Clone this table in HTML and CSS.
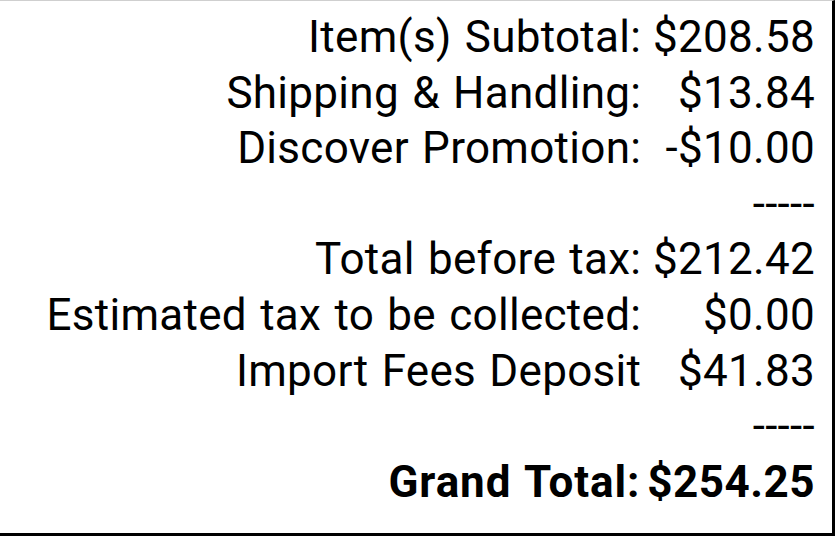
FILE: index.html
```
<!DOCTYPE html>
<html>
<head>
<meta charset="utf-8">
<link rel="stylesheet" href="styles.css">
</head>
<body>
<div class="box">
  <table class="summary">
    <tr><td class="label">Item(s) Subtotal:</td><td class="value">$208.58</td></tr>
    <tr><td class="label">Shipping &amp; Handling:</td><td class="value">$13.84</td></tr>
    <tr><td class="label">Discover Promotion:</td><td class="value">-$10.00</td></tr>
    <tr><td class="label"></td><td class="value">-----</td></tr>
    <tr><td class="label">Total before tax:</td><td class="value">$212.42</td></tr>
    <tr><td class="label">Estimated tax to be collected:</td><td class="value">$0.00</td></tr>
    <tr><td class="label">Import Fees Deposit</td><td class="value">$41.83</td></tr>
    <tr><td class="label"></td><td class="value">-----</td></tr>
    <tr class="grand"><td class="label">Grand Total:</td><td class="value">$254.25</td></tr>
  </table>
</div>
</body>
</html>
```
FILE: styles.css
```
html, body {
  margin: 0;
  padding: 0;
  background: #fff;
}
.box {
  box-sizing: border-box;
  width: 835px;
  height: 536px;
  border-top: 1px solid #cfcfcf;
  border-right: 3px solid #000;
  border-bottom: 3px solid #000;
  display: flex;
  justify-content: flex-end;
  align-items: flex-start;
  padding: 9px 17px 0 0;
  font-family: Roboto, "Noto Sans", sans-serif;
  font-size: 44px;
  line-height: 55.6px;
  letter-spacing: 0.3px;
  word-spacing: 2px;
  color: #000;
}
.summary {
  border-collapse: collapse;
}
.summary td {
  padding: 0;
  white-space: nowrap;
}
.label {
  text-align: right;
  padding-right: 6px !important;
}
.value {
  text-align: right;
}
.grand td {
  font-weight: bold;
  letter-spacing: 0.9px;
}
.grand .value {
  letter-spacing: 0.5px;
}
.grand .label {
  padding-right: 7px !important;
}
```
